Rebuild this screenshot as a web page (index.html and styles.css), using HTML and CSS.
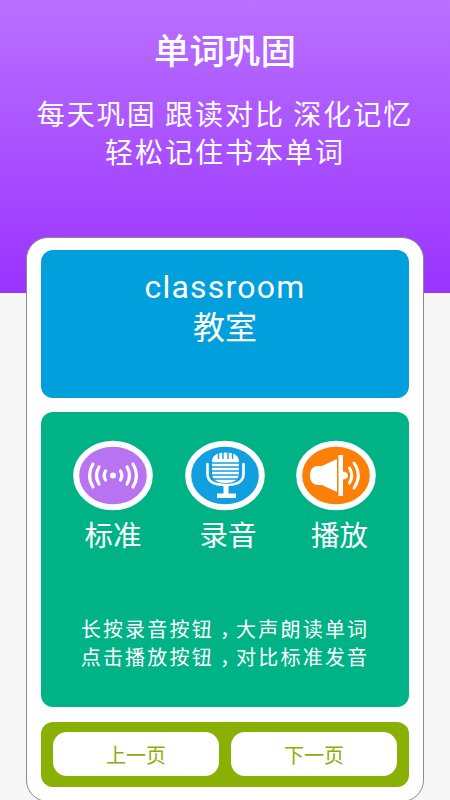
FILE: index.html
```html
<!DOCTYPE html>
<html lang="zh">
<head>
<meta charset="utf-8">
<title>单词巩固</title>
<link rel="stylesheet" href="styles.css">
</head>
<body>
<main class="page">
  <header class="hero">
    <h1 class="title">单词巩固</h1>
    <p class="subtitle">每天巩固 跟读对比 深化记忆<br>轻松记住书本单词</p>
  </header>
  <section class="card">
    <div class="word">
      <div class="word-en">classroom</div>
      <div class="word-zh">教室</div>
    </div>
    <div class="practice">
      <div class="controls">
        <div class="control">
          <svg class="icon" viewBox="0 0 80 71">
            <ellipse cx="40" cy="35.5" rx="36.800" ry="31.800" fill="#b873f2" stroke="#fff" stroke-width="6"/>
            <g fill="none" stroke="#fff" stroke-width="3.2" stroke-linecap="round">
              <path d="M20 24q-7 11.500 0 23"/>
              <path d="M26 27q-5 8.500 0 17"/>
              <path d="M32.500 31q-2.600 4.500 0 9"/>
              <path d="M47.500 31q2.600 4.500 0 9"/>
              <path d="M54 27q5 8.500 0 17"/>
              <path d="M60 24q7 11.500 0 23"/>
            </g>
            <circle cx="40" cy="35.500" r="3" fill="#fff"/>
          </svg>
          <span class="control-label">标准</span>
        </div>
        <div class="control control-record">
          <svg class="icon" viewBox="0 0 80 71">
            <ellipse cx="40" cy="35.5" rx="36.800" ry="31.800" fill="#119fe0" stroke="#fff" stroke-width="6"/>
            <path d="M27 22q0-9.500 13.500-9.500t13.500 9.500v11q0 10-13.500 10T27 33z" fill="#fff"/>
            <g stroke="#119fe0" fill="none">
              <path d="M27 23h27M27 27h27M27 31h27M27 35h27M27 39h27" stroke-width="1.400"/>
              <path d="M33.500 12v7M38 11v8M43 11v8M47.500 12v7" stroke-width="1.400"/>
            </g>
            <path d="M22.500 24v10q0 11 18 11t18-11v-10" fill="none" stroke="#fff" stroke-width="2.600" stroke-linecap="round"/>
            <path d="M38.500 45h5v8.500H51v4.500H32v-4.500h6.500z" fill="#fff"/>
          </svg>
          <span class="control-label">录音</span>
        </div>
        <div class="control control-play">
          <svg class="icon" viewBox="0 0 80 71">
            <ellipse cx="40" cy="35.5" rx="36.800" ry="31.800" fill="#fc8008" stroke="#fff" stroke-width="6"/>
            <path d="M41 19v33L26 45h-5q-7-1-7-9.500t7-9.500h5z" fill="#fff"/>
            <rect x="42.500" y="15" width="4.500" height="41" fill="#fff"/>
            <path d="M47 31.500q5 .5 5 4t-5 4z" fill="#fff"/>
            <g fill="none" stroke="#fff" stroke-width="3" stroke-linecap="round">
              <path d="M53.500 28q4.500 7.500 0 15"/>
              <path d="M58 23q8.500 12.500 0 25"/>
            </g>
          </svg>
          <span class="control-label">播放</span>
        </div>
      </div>
      <p class="hint">长按录音按钮<span class="comma">，</span>大声朗读单词<br>点击播放按钮<span class="comma">，</span>对比标准发音</p>
    </div>
    <nav class="pager">
      <button class="page-btn" type="button">上一页</button>
      <button class="page-btn" type="button">下一页</button>
    </nav>
  </section>
</main>
</body>
</html>
```
FILE: styles.css
```css
* { box-sizing: border-box; }
html, body { margin: 0; height: 800px; overflow: hidden; }
body {
  font-family: "Noto Sans CJK SC", "Noto Sans", sans-serif;
  background: #f7f7f7;
  color: #fff;
}
.page {
  height: 800px;
  background: linear-gradient(#b970ff, #9a33ff) no-repeat top / 100% 293px;
}
.hero {
  height: 237px;
  padding-top: 27px;
  text-align: center;
}
.title {
  margin: 0;
  font-size: 35.500px;
  line-height: 44px;
  font-weight: 500;
}
.subtitle {
  margin: 23px 0 0;
  font-size: 28px;
  line-height: 38px;
  font-weight: 400;
  letter-spacing: 2px;
}
.card {
  width: 398px;
  height: 565px;
  margin-left: 26px;
  padding: 12px 14px 0;
  background: #fff;
  border: 1px solid #8a8a8a;
  border-radius: 22px;
}
.word {
  height: 148px;
  padding-top: 17px;
  border-radius: 12px;
  background: #019fdb;
  text-align: center;
  font-size: 32px;
  line-height: 40px;
}
.word-en { font-family: Roboto, "Noto Sans", sans-serif; letter-spacing: 1.200px; }
.word-zh { margin-top: -2px; }
.practice {
  height: 295px;
  margin-top: 14px;
  padding-top: 28px;
  border-radius: 12px;
  background: #00b386;
}
.controls {
  display: flex;
  padding-left: 32px;
  gap: 31.500px;
}
.control {
  display: flex;
  flex-direction: column;
  align-items: center;
  width: 80px;
}
.icon { display: block; width: 80px; height: 71px; }
.control-label {
  margin-top: 3px;
  font-size: 28.500px;
  line-height: 40px;
}
.control-record .control-label, .control-play .control-label { transform: translateX(3.500px); }
.hint {
  margin: 61px 0 0;
  text-align: center;
  font-size: 20px;
  line-height: 28px;
  letter-spacing: 2.200px;
}
.comma { padding: 0 4px 0 6px; font-feature-settings: "halt"; }
.pager {
  display: flex;
  gap: 12px;
  height: 65px;
  margin-top: 15px;
  padding: 10px 12px 11px;
  border-radius: 12px;
  background: #89b105;
}
.page-btn {
  flex: 1;
  border: 0;
  padding: 0;
  border-radius: 14px;
  background: #fff;
  color: #89b105;
  font: 400 20px "Noto Sans CJK SC", sans-serif;
}
```
